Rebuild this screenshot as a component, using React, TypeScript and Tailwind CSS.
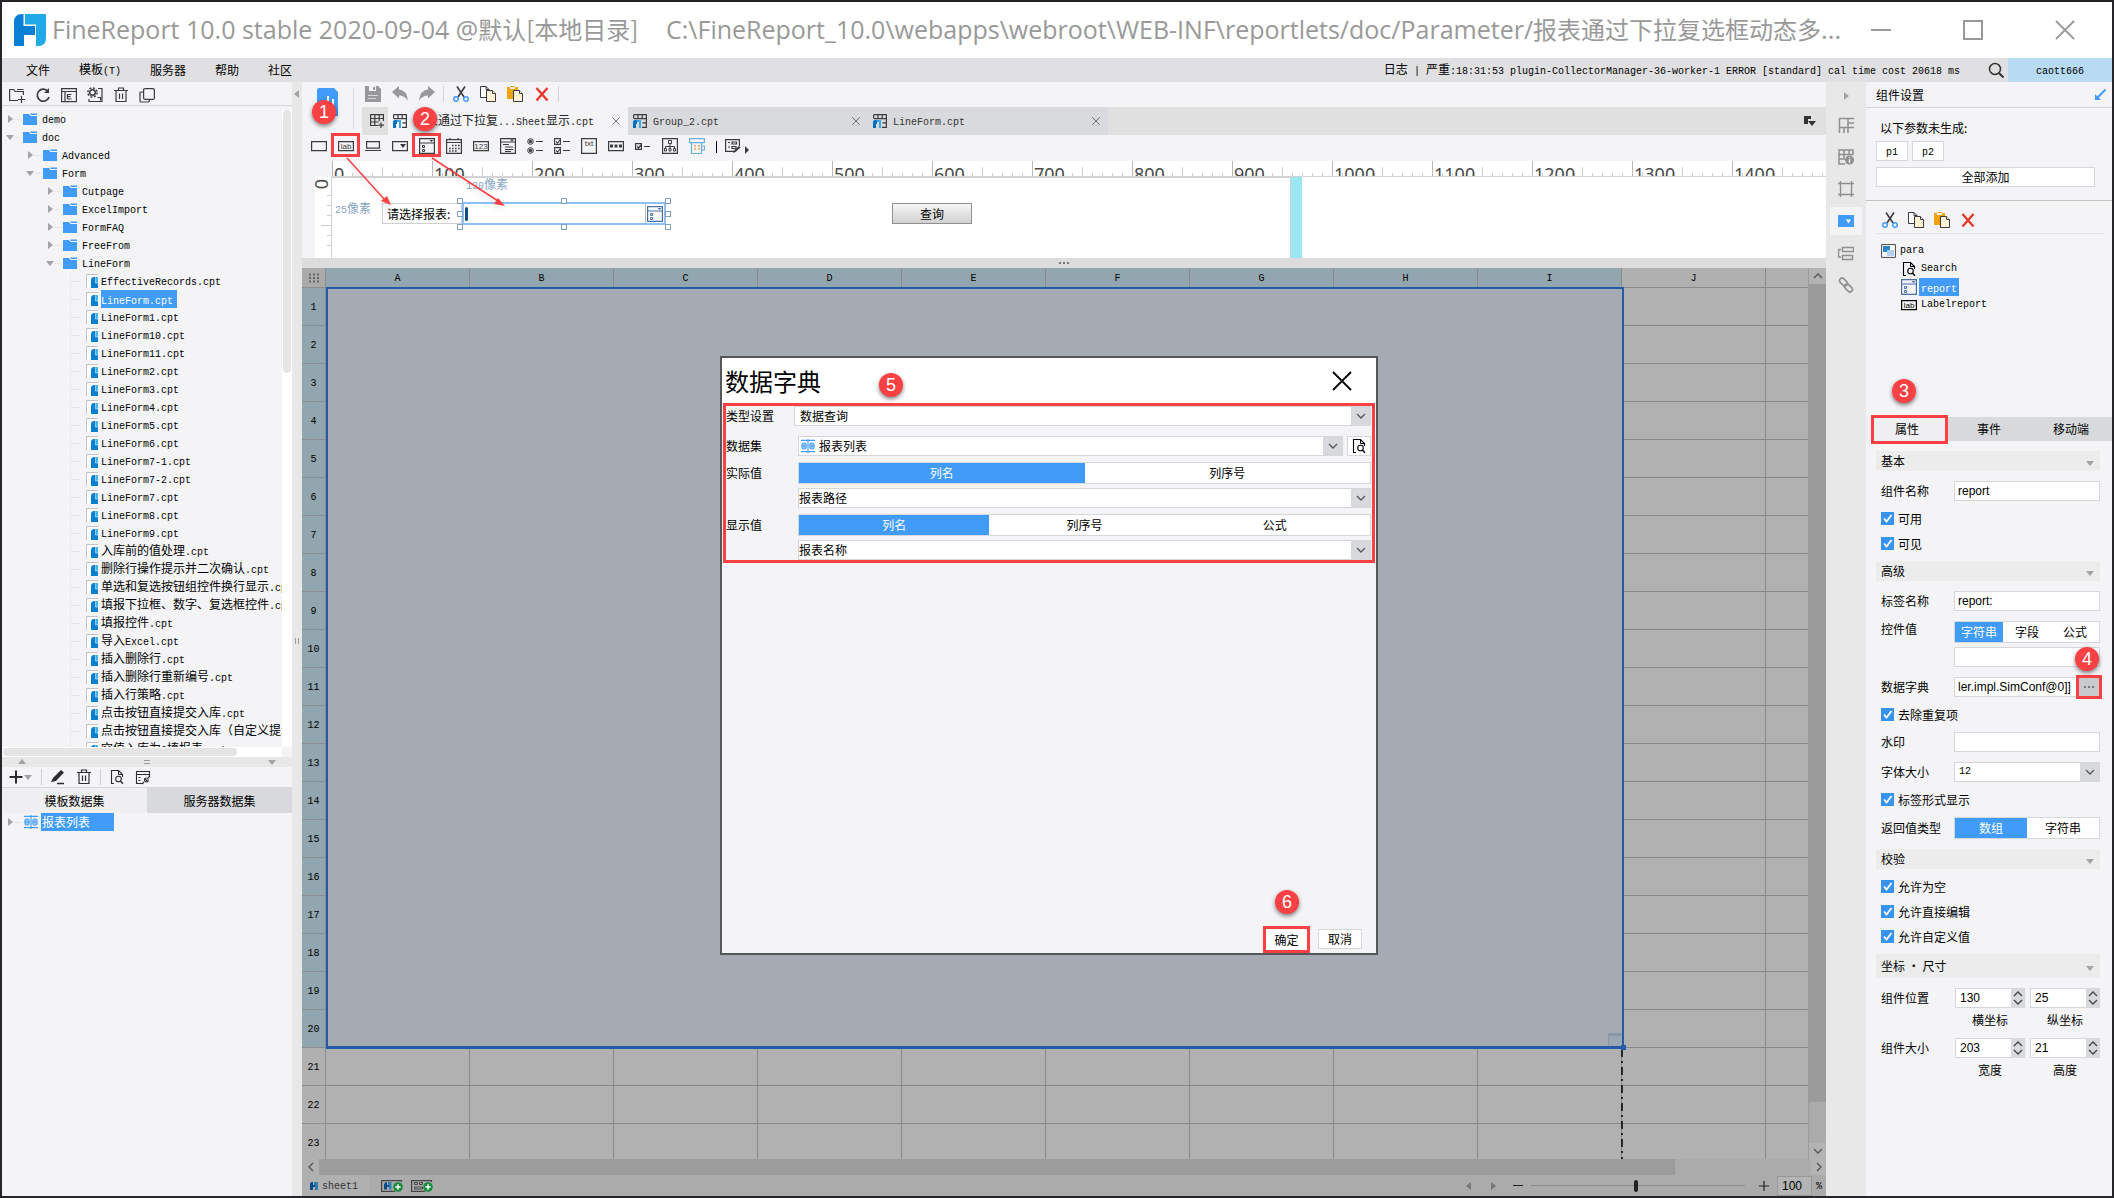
import React from "react";

const CJK = /([\u2e80-\u9fff\uff00-\uffef\u3000-\u303f]+)/;

/* Mixed text: full-width glyphs at the parent size, Latin in half-width mono. */
function T({ children }: { children: string }) {
  return (
    <>
      {children.split(CJK).map((s, i) =>
        i % 2 === 1 ? (
          <React.Fragment key={i}>{s}</React.Fragment>
        ) : s ? (
          <span key={i} className="font-['Liberation_Mono','Noto_Sans_CJK_SC',monospace] text-[10px] whitespace-pre">
            {s}
          </span>
        ) : null
      )}
    </>
  );
}

function Svg({ children, className = "w-4 h-4", box = "0 0 16 16" }: { children: React.ReactNode; className?: string; box?: string }) {
  return (
    <svg viewBox={box} className={"shrink-0 block " + className} fill="none" stroke="currentColor" strokeWidth="1" aria-hidden="true">
      {children}
    </svg>
  );
}

const Scissors = () => (
  <Svg>
    <path d="M4 0.5 11 11M12 0.5 5 11" stroke="#3a3c3e" strokeWidth="1.6" />
    <circle cx="3" cy="13" r="2.3" stroke="#419bf9" strokeWidth="1.5" />
    <circle cx="13" cy="13" r="2.3" stroke="#419bf9" strokeWidth="1.5" />
  </Svg>
);
const Copy = () => (
  <Svg>
    <path d="M.5.5h5.5l3 3v8H.5z" fill="#fff" stroke="#3a3c3e" />
    <path d="M6 .5v3h3" stroke="#3a3c3e" />
    <path d="M6.500 4.500h6l3 3v8h-9z" fill="#fdf1d6" stroke="#3a3c3e" />
    <path d="M12.500 4.500v3h3" fill="#fff" stroke="#3a3c3e" />
  </Svg>
);
const Paste = () => (
  <Svg>
    <path d="M0 1h3v2h5V1h3v12H0z" fill="#f0a30f" stroke="none" />
    <path d="M3.500 .5h4" stroke="#e09a10" />
    <path d="M6.500 4.500h6l3 3v8h-9z" fill="#fdf1d6" stroke="#3a3c3e" />
    <path d="M12.500 4.500v3h3" fill="#fff" stroke="#3a3c3e" />
  </Svg>
);
const Delete = () => (
  <Svg>
    <path d="M2.500 2 13.500 14.500M13.500 2 2.500 14.500" stroke="#e8392f" strokeWidth="2.4" />
  </Svg>
);
const Trash = () => (
  <Svg>
    <path d="M1 3.500h14M5.500 3V1h5v2M3 4v10.500h10V4M6.500 6.500v5.500M9.500 6.500v5.500" strokeWidth="1.2" />
  </Svg>
);
const Preview = () => (
  <Svg>
    <path d="M5 14.500H2.500v-13h7l4 4V8" strokeWidth="1.1" />
    <path d="M9.500 1.500v4h4" />
    <circle cx="9.500" cy="10" r="2.800" strokeWidth="1.1" />
    <path d="m11.500 12.200 2.500 2.500" strokeWidth="1.4" />
  </Svg>
);
const Dropbox = ({ c = "#3a3c3e" }: { c?: string }) => (
  <Svg>
    <g stroke={c}>
      <path d="M.6.6h14.800v14.800H.6zM.6 5h14.800" strokeWidth="1.2" />
      <path d="M10.500 2h4l-2 2z" fill={c} stroke="none" />
      <path d="M3.500 7.500h2v2h-2zM3.500 11.500h2v2h-2z" />
    </g>
  </Svg>
);
const Glyph = ({ t, y = 11 }: { t: string; y?: number }) => (
  <text x="8" y={y} textAnchor="middle" fontSize="8" fontFamily="Liberation Sans, sans-serif" fill="currentColor" stroke="none">
    {t}
  </text>
);
const LabIcon = () => (
  <Svg>
    <path d="M.6 3.600h14.800v9H.6z" strokeWidth="1.2" />
    <Glyph t="lab" />
  </Svg>
);
const DataIcon = () => (
  <Svg className="w-3.5 h-3.5">
    <path d="M0 1.500h16M0 14.500h16M8 0v16" stroke="#419bf9" strokeWidth="1.3" />
    <rect x="1" y="4.500" width="5" height="7" rx="1.500" fill="#8fc3fb" stroke="#419bf9" />
    <rect x="10" y="4.500" width="5" height="7" rx="1.500" fill="#8fc3fb" stroke="#419bf9" />
    <path d="M1 8h5M10 8h5" stroke="#419bf9" />
  </Svg>
);
const Folder = () => (
  <Svg box="0 0 14 12" className="w-3.5 h-3">
    <path d="M0 1h6l1.500 2H14v9H0z" fill="#419bf9" stroke="none" />
    <path d="M7 .5h7v1.500H8z" fill="#419bf9" stroke="none" />
  </Svg>
);
const FileIcon = () => (
  <Svg box="0 0 12 14" className="w-3 h-3.5">
    <path d="M0 0h12v14H0z" fill="#fff" stroke="none" />
    <path d="M.5 14V.5H12" stroke="#c4c4c6" />
    <path d="M5 14V6q0-3 3-3h4v11z" fill="#0a7fd0" stroke="none" />
    <path d="M9.500 3H12v6H9.500z" fill="#3fb4ea" stroke="none" />
    <path d="M9.500 3v6H12" stroke="#d7effb" strokeWidth=".6" />
  </Svg>
);
const TabIcon = () => (
  <Svg box="0 0 14 14" className="w-3.5 h-3.5">
    <path d="M1 .6h12.400v12.800H9M1 4.600h12.400M5 .6v4M9.200.6v4M9.500 8.800h4M.6.6v4" strokeWidth="1.200" stroke="#3a3c3e" />
    <path d="M0 14V8q0-2 2-2h2v4H3v4z" fill="#0a6fc0" stroke="none" />
    <path d="M4 6h4v8H6V8H4z" fill="#36a9e6" stroke="none" />
  </Svg>
);
const Tri = ({ dir, className = "text-[#a3a3a5]" }: { dir: "r" | "l" | "d" | "u"; className?: string }) => (
  <Svg box="0 0 8 8" className={"w-2 h-2 " + className}>
    <path
      d={dir === "r" ? "M2 0l5 4-5 4z" : dir === "l" ? "M6 0 1 4l5 4z" : dir === "d" ? "M0 2h8L4 7z" : "M0 6h8L4 1z"}
      fill="currentColor"
      stroke="none"
    />
  </Svg>
);
const Chev = ({ dir = "d" }: { dir?: "d" | "u" | "l" | "r" }) => (
  <Svg box="0 0 10 10" className="w-2.5 h-2.5">
    <path
      d={dir === "d" ? "M1 3l4 4 4-4" : dir === "u" ? "M1 7l4-4 4 4" : dir === "l" ? "M7 1 3 5l4 4" : "M3 1l4 4-4 4"}
      strokeWidth="1.300"
    />
  </Svg>
);
const Cross = ({ className }: { className: string }) => (
  <Svg box="0 0 20 20" className={className}>
    <path d="M1 1l18 18M19 1 1 19" strokeWidth="1.800" />
  </Svg>
);

function Badge({ n, className }: { n: number; className: string }) {
  return (
    <span
      className={
        "absolute z-20 flex h-6 w-6 items-center justify-center rounded-full bg-[#fc4144] text-lg leading-none text-white shadow-[0_2px_4px_rgba(0,0,0,0.5)] font-['Liberation_Sans',sans-serif] " +
        className
      }
    >
      {n}
    </span>
  );
}

const topTree: [number, string, boolean][] = [
  [0, "demo", false],
  [0, "doc", true],
  [1, "Advanced", false],
  [1, "Form", true],
  [2, "Cutpage", false],
  [2, "ExcelImport", false],
  [2, "FormFAQ", false],
  [2, "FreeFrom", false],
  [2, "LineForm", true],
];
const files = [
  "EffectiveRecords.cpt", "LineForm.cpt", "LineForm1.cpt", "LineForm10.cpt", "LineForm11.cpt", "LineForm2.cpt",
  "LineForm3.cpt", "LineForm4.cpt", "LineForm5.cpt", "LineForm6.cpt", "LineForm7-1.cpt", "LineForm7-2.cpt",
  "LineForm7.cpt", "LineForm8.cpt", "LineForm9.cpt", "入库前的值处理.cpt", "删除行操作提示并二次确认.cpt",
  "单选和复选按钮组控件换行显示.cpt", "填报下拉框、数字、复选框控件.cpt", "填报控件.cpt", "导入Excel.cpt",
  "插入删除行.cpt", "插入删除行重新编号.cpt", "插入行策略.cpt", "点击按钮直接提交入库.cpt",
  "点击按钮直接提交入库（自定义提示）.cpt", "空值入库为0填报表.cpt",
];
const levelPad = ["pl-1", "pl-6", "pl-11"];

function Sidebar() {
  const tools: [string, React.ReactNode][] = [
    ["新建文件夹", <Svg key="a"><path d="M9 13.500H.600v-11h4l1.500 2h8.300V8" strokeWidth="1.200" /><path d="M8 2.500h6.500M12.500 9v7M9 12.500h7" strokeWidth="1.200" /></Svg>],
    ["刷新", <Svg key="b"><path d="M13 4.500A6 6 0 1 0 14 10" strokeWidth="1.700" /><path d="M14 1v5H9z" fill="currentColor" stroke="none" /></Svg>],
    ["显示", <Svg key="c"><path d="M.600 1.600h14.800v13H.600zM.600 4.500h14.800M4 4.500v10M6.500 7.500h4M6.500 12h4M6.500 7v5M6.500 9.700h3" strokeWidth="1.200" /></Svg>],
    ["设置", <Svg key="d"><circle cx="5.500" cy="5.500" r="2.800" strokeWidth="1.500" /><circle cx="5.500" cy="5.500" r="4.600" strokeWidth="1.500" strokeDasharray="2 1.600" /><path d="M11 1.500h4v13H2V12M10.500 10.500h3v3" strokeWidth="1.200" /></Svg>],
    ["删除", <Trash key="e" />],
    ["复制", <Svg key="f"><rect x="4.600" y="1.600" width="10.800" height="10.800" rx="1.500" strokeWidth="1.200" /><path d="M4 5H2q-1 0-1 1v8q0 1 1 1h7q1.500 0 1.500-2" strokeWidth="1.200" /></Svg>],
  ];
  return (
    <aside className="flex w-[290px] shrink-0 flex-col bg-[#f4f4f7]">
      <div className="flex h-6 shrink-0 items-center border-b border-[#d8d8da] pl-0.5 pt-0.5 text-[#3a3c3e]">
        {tools.map(([n, ic]) => (
          <button key={n} aria-label={n} className="flex h-5 w-[26px] items-center justify-center">{ic}</button>
        ))}
      </div>
      <div className="flex h-[641px] shrink-0 pt-1">
        <ul className="min-w-0 flex-1 overflow-hidden whitespace-nowrap">
          {topTree.map(([lv, name, open]) => (
            <li key={name} className={"flex h-[18px] items-center " + levelPad[lv]}>
              <Tri dir={open ? "d" : "r"} />
              <span className="mr-px h-px w-2 bg-[#e6e6e9]" />
              <Folder />
              <span className="ml-[5px]"><T>{name}</T></span>
            </li>
          ))}
          {files.map((f) => (
            <li key={f} className="flex h-[18px] items-center pl-[68px]">
              <span className="h-[18px] w-px shrink-0 bg-[#ebebee]" />
              <span className="mr-1.5 h-px w-[9px] shrink-0 bg-[#e6e6e9]" />
              <FileIcon />
              <span className={f === "LineForm.cpt" ? "ml-[3px] h-[18px] shrink-0 bg-[#419bf9] pr-1 leading-[18px] text-white" : "ml-[3px] shrink-0 leading-[18px]"}>
                <T>{f}</T>
              </span>
            </li>
          ))}
        </ul>
        <div className="w-2.5 bg-white">
          <div className="mx-px h-[263px] rounded-full bg-[#e6e6e7]" />
        </div>
      </div>
      <div className="flex h-2.5 shrink-0 pr-2.5">
        <div className="w-full bg-white p-px">
          <div className="h-2 w-[84%] rounded-full bg-[#e4e4e5]" />
        </div>
      </div>
      <div className="flex h-2.5 shrink-0 items-center justify-between bg-[#e8e8e8] px-4">
        <Tri dir="u" />
        <span className="h-1 w-1.5 border-y border-[#9a9a9a]" />
        <Tri dir="d" />
      </div>
      <div className="flex h-[21px] shrink-0 items-center border-b border-[#d8d8da] text-[#2b2d2f]">
        <button aria-label="添加" className="flex w-[39px] items-center pl-1.5">
          <Svg><path d="M8 1.500v13M1.500 8h13" strokeWidth="2" /></Svg>
          <Tri dir="d" />
        </button>
        <span className="h-4 w-px bg-[#cfcfd2]" />
        <button aria-label="编辑" className="ml-2"><Svg><path d="M1 13l2-4 8-8 3 2.500-8 8.500z" fill="currentColor" stroke="none" /><path d="M7 14.500h7" strokeWidth="1.500" /></Svg></button>
        <button aria-label="删除数据集" className="ml-2.5 mr-2"><Trash /></button>
        <span className="h-4 w-px bg-[#cfcfd2]" />
        <button aria-label="预览" className="ml-2"><Preview /></button>
        <button aria-label="连接" className="ml-2.5"><Svg><path d="M7 14.500H1.500v-12h13V7M1.500 5.500h13M3.500 8.500h2M3.500 11.500h2" strokeWidth="1.100" /><path d="m7 15 2-2M13 9l2-2M9.500 9.500l3.500 3.500" strokeWidth="1.300" /><circle cx="11.300" cy="11" r="2" /></Svg></button>
      </div>
      <div className="grid h-[25px] shrink-0 grid-cols-2">
        <button className="bg-[#efeff1]">模板数据集</button>
        <button className="bg-[#d8d9dc]">服务器数据集</button>
      </div>
      <div className="flex h-[18px] items-center pl-1">
        <Tri dir="r" />
        <span className="mr-0.5 h-px w-2 bg-[#e6e6e9]" />
        <DataIcon />
        <span className="ml-[3px] h-[18px] w-[73px] bg-[#419bf9] pl-px leading-[17px] text-white">报表列表</span>
      </div>
    </aside>
  );
}

const widgets: [string, React.ReactNode][] = [
  ["文本框", <Svg key="1"><path d="M.600 3.600h14.800v9H.600z" strokeWidth="1.200" /></Svg>],
  ["标签", <LabIcon key="2" />],
  ["按钮", <Svg key="3"><path d="M1.600 3.600h12.800v6.500H1.600zM0 12.500h16" strokeWidth="1.200" /></Svg>],
  ["下拉框", <Svg key="4"><path d="M.600 3.600h14.800v9H.600z" strokeWidth="1.200" /><path d="M8 6h6l-3 4z" fill="currentColor" stroke="none" /></Svg>],
  ["下拉复选框", <Dropbox key="5" />],
  ["日期", <Svg key="6"><path d="M.600 1.600h14.800v13.800H.600zM.600 4.500h14.800M4 0v2M12 0v2" strokeWidth="1.200" /><path d="M6 7.500h8M3 10.500h11M3 13h8" strokeWidth="1.600" strokeDasharray="1.600 1.400" /></Svg>],
  ["数字", <Svg key="7"><path d="M.600 3.600h14.800v9H.600z" strokeWidth="1.200" /><Glyph t="123" /></Svg>],
  ["下拉树", <Svg key="8"><path d="M.600 .600h14.800v14.800H.600zM.600 4h14.800M3 6.500h6M5 9h8M5 11.500h8M5 13.500h6" strokeWidth="1.200" /><path d="M10 1.500h4l-2 2z" fill="currentColor" stroke="none" /></Svg>],
  ["单选按钮组", <Svg key="9"><circle cx="3.500" cy="3.500" r="2.800" /><circle cx="3.500" cy="3.500" r="1.300" fill="currentColor" /><circle cx="3.500" cy="12.500" r="2.800" /><circle cx="3.500" cy="12.500" r="1.300" fill="currentColor" /><path d="M9 3.500h7M9 12.500h7" strokeWidth="1.200" /></Svg>],
  ["复选按钮组", <Svg key="10"><path d="M.600 .600h5.800v5.800H.600zM.600 9.600h5.800v5.800H.600zM2 3.500l1.500 1.500L6 2M2 12.500l1.500 1.500L6 11M9 3.500h7M9 12.500h7" strokeWidth="1.100" /></Svg>],
  ["文本域", <Svg key="11"><path d="M.600 .600h14.800v14.800H.600z" strokeWidth="1.200" /><Glyph t="txt" y={8} /></Svg>],
  ["密码", <Svg key="12"><path d="M.600 3.600h14.800v9H.600z" strokeWidth="1.200" /><path d="M2 8h12" strokeWidth="3" strokeDasharray="3 1.500" /></Svg>],
  ["复选框", <Svg key="13"><path d="M.600 5.600h5.800v5.800H.600zM2 8.500l1.500 1.500L6 7M9 8.500h6" strokeWidth="1.200" /></Svg>],
  ["树", <Svg key="14"><path d="M.600 .600h14.800v14.800H.600z" strokeWidth="1.200" /><path d="M6.500 2.500h3v3h-3zM8 5.500v5M3.500 10.500v-2h9v2M2.500 10.500h2v2.500h-2zM7 10.500h2v2.500H7zM11.500 10.500h2v2.500h-2z" /></Svg>],
  ["表格", <Svg key="15"><g stroke="#6ab1de"><path d="M.600 .600h14.800v4H.600zM2.500 4.500v11h10v-11M12.500 8h3v4h-3" strokeWidth="1.200" /><path d="M5 8h2M9 8h2M5 11h2M9 11h2" stroke="#e9a95c" strokeWidth="1.500" /></g></Svg>],
];

function Ruler() {
  return (
    <div className="ml-[30px] flex h-4 shrink-0 overflow-hidden border-b border-[#d4d4d6] bg-white">
      {Array.from({ length: 15 }, (_, i) => (
        <div key={i} className="relative flex h-4 w-[100px] shrink-0 items-end border-l border-[#b9b9bb]">
          <span className="absolute left-px top-0.5 z-10 text-lg leading-[22px] text-[#4a4a4a] font-['Noto_Sans',sans-serif]">{i * 100}</span>
          {Array.from({ length: 9 }, (_, k) => (
            <span key={k} className={k === 4 ? "ml-[9px] h-2.5 w-px bg-[#cdcdcf]" : "ml-[9px] h-1 w-px bg-[#cdcdcf]"} />
          ))}
        </div>
      ))}
    </div>
  );
}

const Handle = ({ className }: { className: string }) => <span className={"absolute h-1.5 w-1.5 border border-[#7f9fc2] bg-white " + className} />;

function DesignArea() {
  return (
    <div className="flex h-[81px] shrink-0 pl-[13px]">
      <div className="flex w-[17px] shrink-0 flex-col items-end border-r border-[#d0d0d2] bg-white">
        <span className="-mt-1 h-[22px] w-4 -rotate-90 text-center text-lg leading-[18px] text-[#4a4a4a] font-['Noto_Sans',sans-serif]">0</span>
        {[0, 1, 2, 3, 4, 5].map((k) => (
          <span key={k} className={k === 3 ? "mb-[9px] h-px w-2.5 shrink-0 bg-[#cdcdcf]" : "mb-[9px] h-px w-1 shrink-0 bg-[#cdcdcf]"} />
        ))}
      </div>
      <div className="relative flex min-w-0 flex-1 bg-white">
        <div className="w-[959px] border-t border-r border-[#d0d0d2]" />
        <div className="w-[11px] bg-[#9ce5f4]" />
        <span className="absolute left-[3px] top-[22px] leading-[18px] text-[#8aa5c4]"><T>25像素</T></span>
        <span className="absolute left-[134px] -top-0.5 leading-[18px] text-[#8aa5c4]"><T>130像素</T></span>
        <label htmlFor="rep" className="absolute left-[50px] top-[26px] h-[21px] w-20 border border-[#d0d0d2] pl-1 leading-5">请选择报表:</label>
        <div className="absolute left-[130px] top-[25px] flex h-[23px] w-[204px] items-center border-2 border-[#8ec0f7] bg-white">
          <span className="ml-px h-3.5 w-[3px] rounded-sm bg-[#0f4c81]" />
          <input id="rep" className="h-full min-w-0 flex-1 border-r border-[#bdbdbf] outline-none" />
          <span className="mx-px"><Dropbox c="#4a6ea5" /></span>
          <Handle className="-left-[7px] -top-1.5" /><Handle className="left-[97px] -top-1.5" /><Handle className="-right-[7px] -top-1.5" />
          <Handle className="-left-[7px] top-[7px]" /><Handle className="-right-[7px] top-[7px]" />
          <Handle className="-left-[7px] -bottom-[7px]" /><Handle className="left-[97px] -bottom-[7px]" /><Handle className="-right-[7px] -bottom-[7px]" />
        </div>
        <button className="absolute left-[560px] top-[26px] h-[21px] w-20 border border-[#8f8f8f] bg-linear-to-b from-[#f6f6f6] to-[#d2d2d2] leading-none">查询</button>
      </div>
    </div>
  );
}

const cols = "ABCDEFGHIJ".split("");

function Sheet() {
  return (
    <div className="flex min-h-0 flex-1 flex-col bg-[#ababab] text-black">
      <div className="flex min-h-0 flex-1">
        <div className="relative min-w-0 flex-1 overflow-hidden bg-[#b1b1b1]">
          <table className="w-full table-fixed border-separate border-spacing-0 font-['Liberation_Mono',monospace] text-[10px]">
            <colgroup>
              <col className="w-6" />
              {cols.map((c) => <col key={c} className="w-36" />)}
              <col />
            </colgroup>
            <thead>
              <tr className="h-5">
                <th className="border-r border-b border-[#8e8e8e] bg-[#aaa] p-0 text-[#444]">
                  <Svg className="mx-auto h-2.5 w-2.5" box="0 0 10 10"><path d="M0 1.500h10M0 5h10M0 8.500h10" strokeWidth="2" strokeDasharray="2 2" stroke="#666" /></Svg>
                </th>
                {cols.map((c) => (
                  <th key={c} scope="col" className={"border-r border-b border-[#8a8a8a] p-0 pt-[3px] font-normal " + (c === "J" ? "bg-[#b0b0b0]" : "bg-[#91a6ae]")}>{c}</th>
                ))}
                <th className="border-b border-[#8a8a8a] bg-[#b0b0b0] p-0" />
              </tr>
            </thead>
            <tbody>
              {Array.from({ length: 23 }, (_, r) => (
                <tr key={r} className="h-[38px]">
                  <th scope="row" className={"border-r border-b border-[#8a8f92] p-0 pt-0.5 font-normal " + (r < 20 ? "bg-[#91a6ae]" : "bg-[#b0b0b0]")}>{r + 1}</th>
                  {cols.map((c) => <td key={c} className="border-r border-b border-[#888] p-0" />)}
                  <td className="border-b border-[#888] p-0" />
                </tr>
              ))}
            </tbody>
          </table>
          <div className="absolute left-6 top-[19px] flex h-[762px] w-[1298px] items-end justify-end border-2 border-b-3 border-[#235ba8] bg-[#a5aab3]">
            <span className="h-[13px] w-3.5 border-l border-t-3 border-[#8797a5] bg-[#9ca6b3]" />
          </div>
          <svg className="absolute left-[1319px] top-[781px] h-28 w-0.5" aria-hidden="true">
            <path d="M1 0v112" stroke="#000" strokeWidth="1.500" strokeDasharray="8 4 2 4" />
          </svg>
          <div className="absolute left-[1319px] top-[777px] h-[5px] w-[5px] bg-[#235ba8]" />
        </div>
        <div className="flex w-[18px] shrink-0 flex-col border-l border-[#9c9c9c] text-[#555]">
          <span className="flex h-4 items-center justify-center bg-[#b3b3b3]"><Chev dir="u" /></span>
          <span className="grow-[20] basis-0 bg-[#9b9b9b]" />
          <span className="grow basis-0" />
          <span className="flex h-4 items-center justify-center bg-[#b3b3b3]"><Chev /></span>
        </div>
      </div>
      <div className="flex h-4 shrink-0 text-[#555]">
        <span className="flex w-[17px] items-center justify-center bg-[#b0b0b0]"><Chev dir="l" /></span>
        <span className="grow-[10] basis-0 bg-[#9c9c9c]" />
        <span className="grow basis-0" />
        <span className="flex w-[15px] items-center justify-center bg-[#b3b3b3]"><Chev dir="r" /></span>
      </div>
      <div className="flex h-[21px] shrink-0 items-center">
        <button className="flex h-full w-[67px] items-center bg-[#b0b0b0] pl-2 text-[#333]">
          <Svg box="0 0 8 8" className="h-2 w-2"><path d="M0 8V2q0-2 2-2h1v3h2v2H3v3z" fill="#0a4a85" stroke="none" /><path d="M4 0h4v8H5V3H4z" fill="#2b7fb0" stroke="none" /></Svg>
          <span className="ml-1"><T>sheet1</T></span>
        </button>
        {["新增模板", "新增聚合块"].map((n, i) => (
          <button key={n} aria-label={n} className={i ? "ml-2" : "ml-3"}>
            <Svg box="0 0 22 12" className="h-3 w-[22px]">
              <path d="M20.500 2V.600H.600v10.800H14" stroke="#444" strokeWidth="1.200" />
              {i === 0 ? (
                <>
                  <path d="M3 9.500V4l2-2h1v3h2v2H6v2.500z" fill="#0a4a85" stroke="none" />
                  <path d="M7 2h3.500v7.500H8V5H7z" fill="#2b7fb0" stroke="none" />
                </>
              ) : (
                <path d="M3.500 2.500h3v2h-3zM8.500 2.500h3v2h-3zM3.500 7h8v2h-8z" stroke="#444" />
              )}
              <circle cx="17" cy="7" r="4.800" fill="#168a3c" stroke="none" />
              <path d="M17 4.300v5.400M14.300 7h5.400" stroke="#fff" strokeWidth="1.400" />
            </Svg>
          </button>
        ))}
        <span className="flex-1" />
        <Tri dir="l" className="text-[#777]" />
        <span className="w-4" />
        <Tri dir="r" className="text-[#777]" />
        <button aria-label="缩小" className="ml-4 h-px w-2.5 bg-[#222]" />
        <label className="relative mx-2 flex h-4 w-[214px] items-center">
          <input aria-label="缩放" type="range" defaultValue={49} className="h-px w-full appearance-none bg-[#8d8d8d] [&::-webkit-slider-thumb]:h-3 [&::-webkit-slider-thumb]:w-1 [&::-webkit-slider-thumb]:appearance-none [&::-webkit-slider-thumb]:rounded-sm [&::-webkit-slider-thumb]:bg-[#222]" />
        </label>
        <button aria-label="放大" className="ml-1.5 mr-2 text-[#222]"><Svg className="h-2.5 w-2.5" box="0 0 10 10"><path d="M5 0v10M0 5h10" strokeWidth="1.200" /></Svg></button>
        <input aria-label="缩放比例" defaultValue="100" className="h-5 w-[35px] border border-[#999] bg-[#b4b4b4] pl-1 font-['Liberation_Sans',sans-serif]" />
        <span className="w-3.5 text-center"><T>%</T></span>
      </div>
    </div>
  );
}

const iconCell = "flex h-6 w-[27px] items-center justify-center";

function Center() {
  const tabs = ["Group_2.cpt", "LineForm.cpt"];
  return (
    <main className="relative flex min-w-0 flex-1 flex-col bg-[#f4f4f7]">
      <div className="flex h-[53px] shrink-0">
        <div className="my-1.5 w-[52px] shrink-0 border-r border-[#dcdcde] pl-[15px]">
          <Svg box="0 0 22 34" className="h-[34px] w-[22px]">
            <path d="M2 0h15l4 4v24H0V2q0-2 2-2z" fill="#419bf9" stroke="none" />
            <path d="M6 18v-4M11 18V8M16 18v-7" stroke="#fff" strokeWidth="2" />
            <path d="M7 30h8l-4 4z" fill="#666" stroke="none" />
          </Svg>
        </div>
        <div className="flex min-w-0 flex-1 flex-col">
          <div className="flex h-[25px] shrink-0 items-start pl-[5px]">
            <button aria-label="保存" className={iconCell}><Svg><path d="M0 0h13l3 3v13H0z" fill="#98989b" stroke="none" /><path d="M4 0h7v5H4z" fill="#f4f4f7" stroke="none" /><path d="M8 1h2v3H8z" fill="#98989b" stroke="none" /><path d="M3 9.500h10M3 12.500h8" stroke="#d8d8da" /></Svg></button>
            <button aria-label="撤销" className={iconCell}><Svg><path d="M0 6 7 0v3.500q8 .5 9 11.500-3-5.500-9-5.500v3z" fill="#98989b" stroke="none" /></Svg></button>
            <button aria-label="重做" className={iconCell}><Svg><path d="M16 6 9 0v3.500Q1 4 0 15q3-5.500 9-5.500v3z" fill="#98989b" stroke="none" /></Svg></button>
            <span className="mx-[3px] mt-1 h-4 w-px bg-[#d4d4d6]" />
            <button aria-label="剪切" className={iconCell}><Scissors /></button>
            <button aria-label="复制" className={iconCell}><Copy /></button>
            <button aria-label="粘贴" className={iconCell}><Paste /></button>
            <button aria-label="删除" className={iconCell}><Delete /></button>
            <span className="mx-[3px] mt-1 h-4 w-px bg-[#d4d4d6]" />
          </div>
          <div className="ml-2 flex h-7 bg-[#e0e0e1]">
            <button aria-label="新建模板" className="flex w-[26px] items-center justify-end pr-1 text-[#3a3c3e]">
              <Svg box="0 0 14 14" className="h-3.5 w-3.5"><path d="M8 11.500H.600V.600h12.800V7M.600 4.500h12.800M.600 8h8M4.800.600v11M9.200.600V7M11 8.500v5.500M8.300 11.200h5.700" strokeWidth="1.200" /></Svg>
            </button>
            <div className="flex w-60 items-center bg-[#f4f4f7] pl-[5px]">
              <TabIcon />
              <span className="ml-[7px] flex-1 whitespace-nowrap text-[#222]"><T>报表通过下拉复...Sheet显示.cpt</T></span>
              <button aria-label="关闭" className="mr-2 text-[#444]"><Cross className="h-2 w-2" /></button>
            </div>
            {tabs.map((t) => (
              <div key={t} className="flex w-60 items-center bg-[#d9dadd] pl-[5px]">
                <TabIcon />
                <span className="ml-1.5 flex-1 text-[#333]"><T>{t}</T></span>
                <button aria-label="关闭" className="mr-2 text-[#444]"><Cross className="h-2 w-2" /></button>
              </div>
            ))}
            <span className="flex-1" />
            <button aria-label="全部标签" className="mr-2.5"><Svg className="h-3 w-3" box="0 0 12 12"><path d="M0 1h7v3H4v5H0z" fill="#333" stroke="none" /><path d="M4 6h8l-4 5z" fill="#333" stroke="none" /></Svg></button>
          </div>
        </div>
      </div>
      <div className="flex h-[26px] shrink-0 items-start pl-[3px] text-[#3a3c3e]">
        {widgets.map(([n, ic]) => (
          <button key={n} aria-label={n} className="relative flex h-[22px] w-[27px] items-center justify-center">
            {ic}
            {(n === "标签" || n === "下拉复选框") && <span className="absolute -inset-x-px -top-0.5 bottom-0 border-3 border-[#f94144]" />}
          </button>
        ))}
        <span className="ml-1.5 mt-1.5 h-3 w-px bg-black" />
        <button aria-label="自定义控件" className="ml-2 flex h-[22px] items-center gap-1">
          <Svg><path d="M9 13.400H.600V1.600h13.800V8M3 4.500h2M7 4h4.500v2H7zM3 9h2M7 8.500h4v2H7z" strokeWidth="1.200" /><path d="m8 15 1-2.500L14 8l1.500 1.500L10.500 14z" fill="currentColor" stroke="none" /></Svg>
          <Svg box="0 0 4 8" className="mt-2 h-2 w-1"><path d="M0 0l4 4-4 4z" fill="currentColor" stroke="none" /></Svg>
        </button>
      </div>
      <Ruler />
      <DesignArea />
      <div className="flex h-2.5 shrink-0 items-center justify-center gap-0.5 bg-[#dcdcdd]">
        {[0, 1, 2].map((k) => <span key={k} className="h-0.5 w-0.5 bg-[#777]" />)}
      </div>
      <Sheet />
      <Badge n={1} className="left-2.5 top-[18px]" />
      <Badge n={2} className="left-[111px] top-[25px]" />
      <svg className="pointer-events-none absolute left-10 top-[72px] z-10 h-14 w-[170px] drop-shadow-md" viewBox="0 0 170 56" aria-hidden="true">
        <path d="M5 4 43 46M90 4l66 43" stroke="#f94144" strokeWidth="1.500" />
        <path d="m49 51-10-4 6-5zM163 52l-11-2 4-6z" fill="#f94144" />
      </svg>
    </main>
  );
}

function Rail() {
  const icons = [
    <Svg key="0"><path d="M1.500 16V1.500H10V16M1.500 10.500H10M6 10.500V16M10 1.500h6M10 6h6M10 10.500h6" strokeWidth="1.500" /></Svg>,
    <Svg key="1"><path d="M7 15H1V1h14v5M1 5.500h14M1 10h6M6 1v9M11 1v4" strokeWidth="1.500" /><circle cx="11.500" cy="11" r="4.500" fill="#8f8f92" stroke="none" /><path d="M11.500 8v1M11.500 10v4" stroke="#e8e8e8" strokeWidth="1.500" /></Svg>,
    <Svg key="2"><path d="M0 2.500h16M0 13.500h16M2.500 0v16M13.500 0v16" strokeWidth="1.400" /></Svg>,
    <Svg key="3"><path d="M0 2h16v12H0z" fill="#419bf9" stroke="none" /><path d="M8 6.500h5l-2.500 4z" fill="#fff" stroke="none" /></Svg>,
    <Svg key="4"><path d="M4.500 2.500H15.500v4H4.500zM4.500 10.500h10v4h-10zM3 4.500H.500V12H3" strokeWidth="1.500" /></Svg>,
    <Svg key="5"><rect x="1" y="2.500" width="9" height="5" rx="2.500" transform="rotate(45 5.500 5)" strokeWidth="1.600" /><rect x="6" y="8.500" width="9" height="5" rx="2.500" transform="rotate(45 10.500 11)" strokeWidth="1.600" /></Svg>,
  ];
  return (
    <nav className="flex w-10 shrink-0 flex-col items-center bg-[#e8e8e8] text-[#8f8f92]">
      <span className="flex h-[27px] items-center"><Tri dir="r" /></span>
      {icons.map((ic, i) => (
        <button key={i} aria-label={"面板" + (i + 1)} className={i === 3 ? "my-0.5 flex h-7 w-8 items-center justify-center bg-[#f4f4f7]" : "my-0.5 flex h-7 w-8 items-center justify-center"}>
          {ic}
        </button>
      ))}
    </nav>
  );
}

const box = "border border-[#d6d7da] bg-white";

function Head({ children, tall }: { children: string; tall?: boolean }) {
  return (
    <h3 className={"flex items-center justify-between bg-[#ececec] pl-[5px] pr-1.5 " + (tall ? "h-6" : "h-5")}>
      {children}
      <span className="mt-1"><Tri dir="d" /></span>
    </h3>
  );
}
function Check({ children }: { children: string }) {
  return (
    <label className="flex h-[15px] items-center gap-1 pl-[5px]">
      <span className="grid h-[13px] w-[13px] place-items-center">
        <input type="checkbox" defaultChecked className="col-start-1 row-start-1 h-[13px] w-[13px] appearance-none bg-[#3693f0]" />
        <Svg box="0 0 13 13" className="pointer-events-none col-start-1 row-start-1 h-[13px] w-[13px] text-white"><path d="M3 6.500 5.500 9.500 10.500 3" strokeWidth="1.800" /></Svg>
      </span>
      {children}
    </label>
  );
}
function Field({ label, id, value = "" }: { label: string; id: string; value?: string }) {
  return (
    <div className="flex h-5 items-center">
      <label htmlFor={id} className="w-[78px] shrink-0 pl-[5px]">{label}</label>
      <input id={id} defaultValue={value} className={"h-5 min-w-0 flex-1 px-[3px] font-['Liberation_Sans',sans-serif] " + box} />
    </div>
  );
}
function Seg({ items, className = "" }: { items: string[]; className?: string }) {
  return (
    <div className={"flex h-[22px] " + box + " " + className}>
      {items.map((t, i) => (
        <button key={t} type="button" className={"flex-1 " + (i === 0 ? "bg-[#419bf9] text-white" : "")}>{t}</button>
      ))}
    </div>
  );
}
function Pick({ id, value, label, className = "", pad = "pl-0", icon }: { id: string; value: string; label?: string; className?: string; pad?: string; icon?: React.ReactNode }) {
  return (
    <div className={"flex h-5 items-center " + box + " " + className}>
      {icon}
      <select id={id} aria-label={label} defaultValue={value} className={"h-full min-w-0 flex-1 appearance-none bg-white outline-none " + pad}>
        <option>{value}</option>
      </select>
      <span className="flex h-full w-[19px] items-center justify-center bg-[#d8d9dc] text-[#555]"><Chev /></span>
    </div>
  );
}
function Spin({ id, label, value }: { id: string; label: string; value: string }) {
  return (
    <div className="flex-1">
      <div className={"flex h-5 " + box}>
        <input id={id} defaultValue={value} className="h-full w-0 min-w-0 flex-1 pl-1 font-['Liberation_Sans',sans-serif]" />
        <div className="flex w-[13px] flex-col items-center justify-between bg-[#d8d9dc] text-[#444]">
          <button type="button" aria-label={label + "增加"} className="h-2"><Chev dir="u" /></button>
          <button type="button" aria-label={label + "减少"} className="h-2.5"><Chev /></button>
        </div>
      </div>
      <label htmlFor={id} className="mt-1 block h-4 text-center leading-4">{label}</label>
    </div>
  );
}

function RightPanel() {
  return (
    <aside className="relative flex w-[246px] shrink-0 flex-col bg-[#f4f4f7]">
      <div className="flex h-[26px] shrink-0 items-center justify-between border-b border-[#d4d4d6] pl-2.5 pr-1.5">
        组件设置
        <Svg className="h-3 w-3" box="0 0 12 12"><path d="M11.500.500 3 9" stroke="#419bf9" strokeWidth="2" /><path d="M1 5v6h6z" fill="#419bf9" stroke="none" /></Svg>
      </div>
      <div className="border-b border-[#c4c4c0] px-2.5 pb-[13px] pt-3">
        <p className="h-4 pl-1 leading-4">以下参数未生成:</p>
        <div className="mt-[5px] flex gap-1">
          <button className={"h-5 w-8 leading-none " + box}><T>p1</T></button>
          <button className={"h-5 w-8 leading-none " + box}><T>p2</T></button>
        </div>
        <button className={"mt-1.5 h-5 w-[219px] " + box}>全部添加</button>
      </div>
      <div className="ml-2.5 mr-2 flex h-[33px] shrink-0 items-center border-b border-[#e2e2e5] pl-0.5 pt-1.5">
        <button aria-label="剪切控件" className="w-[26px] pl-1"><Scissors /></button>
        <button aria-label="复制控件" className="w-[26px] pl-1"><Copy /></button>
        <button aria-label="粘贴控件" className="w-[26px] pl-1"><Paste /></button>
        <button aria-label="删除控件" className="w-[26px] pl-1"><Delete /></button>
      </div>
      <ul className="h-[183px] shrink-0 pt-2">
        <li className="flex h-[18px] items-center gap-1 pl-[15px]">
          <Svg box="0 0 15 14" className="h-3.5 w-[15px]"><path d="M.600 .600h13.800v12.800H.600z" fill="#fff" stroke="#444" /><path d="M2 2h7v6H2z" fill="#2a86c8" stroke="none" /><path d="M6 6h7v6H6z" fill="#b3d2f3" stroke="none" /></Svg>
          <T>para</T>
        </li>
        <li className="flex h-[18px] items-center gap-1 pl-[35px]"><span className="w-4"><Preview /></span><T>Search</T></li>
        <li className="flex h-[18px] items-center gap-0.5 pl-[35px]"><Dropbox c="#4a6ea5" /><span className="h-[18px] bg-[#419bf9] px-0.5 leading-[18px] text-white"><T>report</T></span></li>
        <li className="flex h-[18px] items-center gap-1 pl-[35px]"><LabIcon /><T>Labelreport</T></li>
      </ul>
      <div className="relative grid h-6 shrink-0 grid-cols-3">
        <button className="bg-[#efeff1]">属性</button>
        <button className="bg-[#d8d9dc]">事件</button>
        <button className="bg-[#d8d9dc]">移动端</button>
        <span className="pointer-events-none absolute left-[5px] -top-0.5 h-[29px] w-[77px] border-3 border-[#f94144]" />
      </div>
      <form className="ml-2.5 mr-3 mt-2.5 flex flex-col gap-2.5">
        <Head>基本</Head>
        <Field label="组件名称" id="wname" value="report" />
        <Check>可用</Check>
        <Check>可见</Check>
        <Head>高级</Head>
        <Field label="标签名称" id="lname" value="report:" />
        <div className="flex">
          <label htmlFor="wval" className="w-[78px] shrink-0 pl-[5px] leading-4">控件值</label>
          <div className="flex-1">
            <Seg items={["字符串", "字段", "公式"]} />
            <input id="wval" className={"mt-1 block h-5 w-full " + box} />
          </div>
        </div>
        <div className="relative flex h-5 items-center">
          <label htmlFor="dict" className="w-[78px] shrink-0 pl-[5px]">数据字典</label>
          <input id="dict" defaultValue="ler.impl.SimConf@0]]" className={"h-5 min-w-0 flex-1 pl-[3px] font-['Liberation_Sans',sans-serif] " + box} />
          <button type="button" aria-label="编辑数据字典" className="relative flex h-5 w-[23px] items-center justify-center gap-0.5 bg-[#c9cacd]">
            {[0, 1, 2].map((k) => <span key={k} className="h-0.5 w-0.5 bg-[#777]" />)}
            <span className="absolute -inset-y-0.5 -left-px -right-0.5 border-3 border-[#f94144]" />
          </button>
          <Badge n={4} className="-top-[30px] right-px" />
        </div>
        <Check>去除重复项</Check>
        <Field label="水印" id="wm" />
        <div className="flex h-5 items-center">
          <label htmlFor="fs" className="w-[78px] shrink-0 pl-[5px]">字体大小</label>
          <Pick id="fs" value="12" className="flex-1 font-['Liberation_Mono',monospace] text-[10px]" pad="pl-1" />
        </div>
        <Check>标签形式显示</Check>
        <div className="flex h-[22px] items-center">
          <span className="w-[78px] shrink-0 pl-[5px]">返回值类型</span>
          <Seg items={["数组", "字符串"]} className="flex-1" />
        </div>
        <Head>校验</Head>
        <Check>允许为空</Check>
        <Check>允许直接编辑</Check>
        <Check>允许自定义值</Check>
        <Head tall>坐标 · 尺寸</Head>
        <div className="flex gap-[5px]">
          <span className="w-[74px] shrink-0 pl-[5px] leading-5">组件位置</span>
          <Spin id="px" label="横坐标" value="130" />
          <Spin id="py" label="纵坐标" value="25" />
        </div>
        <div className="flex gap-[5px]">
          <span className="w-[74px] shrink-0 pl-[5px] leading-5">组件大小</span>
          <Spin id="sw" label="宽度" value="203" />
          <Spin id="sh" label="高度" value="21" />
        </div>
      </form>
      <Badge n={3} className="left-[26px] top-[297px]" />
    </aside>
  );
}

function Dialog() {
  return (
    <section role="dialog" aria-label="数据字典" className="absolute left-[718px] top-[354px] z-30 flex h-[599px] w-[658px] flex-col border-2 border-[#55585b] bg-[#f4f4f7]">
      <header className="flex h-[45px] shrink-0 items-center justify-between bg-white pl-[3px] pr-6 text-2xl">
        数据字典
        <button aria-label="关闭"><Cross className="h-5 w-5" /></button>
      </header>
      <div className="mx-px flex h-40 shrink-0 flex-col border-3 border-[#f94144] pr-px">
        <div className="flex h-5 items-center">
          <label htmlFor="d1" className="w-[68px]">类型设置</label>
          <Pick id="d1" value="数据查询" className="flex-1" pad="pl-[5px]" />
        </div>
        <div className="mt-2.5 flex h-5 items-center">
          <label htmlFor="d2" className="w-[72px]">数据集</label>
          <Pick id="d2" value="报表列表" className="flex-1 pl-0.5" pad="pl-1" icon={<DataIcon />} />
          <button aria-label="预览数据集" className={"ml-1 flex h-5 w-6 items-center justify-center " + box}><Preview /></button>
        </div>
        <div className="mt-1.5 flex h-[22px] items-center">
          <span className="w-[72px]">实际值</span>
          <Seg items={["列名", "列序号"]} className="flex-1" />
        </div>
        <Pick id="d3" label="实际值" value="报表路径" className="ml-[72px] mt-1" />
        <div className="mt-1.5 flex h-[22px] items-center">
          <span className="w-[72px]">显示值</span>
          <Seg items={["列名", "列序号", "公式"]} className="flex-1" />
        </div>
        <Pick id="d4" label="显示值" value="报表名称" className="ml-[72px] mt-1" />
      </div>
      <footer className="mt-auto flex h-[27px] shrink-0 justify-end gap-2 pr-3.5">
        <button className="h-[27px] w-[47px] border-3 border-[#f94144] bg-white">确定</button>
        <button className={"mt-[3px] h-5 w-11 " + box}>取消</button>
      </footer>
      <Badge n={5} className="left-[157px] top-[15px]" />
      <Badge n={6} className="left-[553px] top-[532px]" />
    </section>
  );
}

export default function App() {
  return (
    <div className="relative flex h-screen flex-col overflow-hidden border-2 border-[#26262a] bg-[#f4f4f7] text-xs leading-4 text-black font-['Noto_Sans_CJK_SC',sans-serif]">
      <header className="flex h-14 shrink-0 items-center bg-white pl-3 text-2xl text-[#999]">
        <Svg box="0 0 32 32" className="h-8 w-8">
          <path d="M0 32V8Q0 0 8 0h1.500v12H21v9H10v11z" fill="#0a7fd6" stroke="none" />
          <path d="M11 0h21v24q0 8-8 8h-2V10.500H11z" fill="#22a9e8" stroke="none" />
        </Svg>
        <h1 className="ml-1.5 flex flex-1 whitespace-pre">
          <span className="w-[614px]"><span className="font-['Open_Sans',sans-serif] text-[25px]">FineReport 10.0 stable 2020-09-04 @</span>默认[本地目录]</span>
          <span><span className="font-['Open_Sans',sans-serif] text-[25px]">C:\FineReport_10.0\webapps\webroot\WEB-INF\reportlets/doc/Parameter/</span>报表通过下拉复选框动态多...</span>
        </h1>
        <div className="flex w-[241px] shrink-0 items-center justify-between pr-[37px]">
          <button aria-label="最小化" className="h-5 w-5"><Svg box="0 0 20 20" className="h-5 w-5"><path d="M0 10h20" strokeWidth="2" /></Svg></button>
          <button aria-label="最大化" className="h-5 w-5 border-2 border-[#999]" />
          <button aria-label="关闭"><Cross className="h-5 w-5" /></button>
        </div>
      </header>
      <div className="flex h-6 shrink-0 items-center bg-[#e0e0e2] pl-6">
        <nav className="flex flex-1 gap-[29px]">
          {["文件", "模板(T)", "服务器", "帮助", "社区"].map((m) => <button key={m} className="whitespace-nowrap"><T>{m}</T></button>)}
        </nav>
        <span className="mr-7 whitespace-nowrap"><T>日志 | 严重:18:31:53 plugin-CollectorManager-36-worker-1 ERROR [standard] cal time cost 20618 ms</T></span>
        <button aria-label="搜索" className="mr-1 text-[#333]"><Svg><circle cx="7" cy="7" r="5.500" strokeWidth="1.500" /><path d="m11 11 4.500 4.500" strokeWidth="2" /></Svg></button>
        <button className="h-full w-[104px] bg-[#b7dbf2]"><T>caott666</T></button>
      </div>
      <div className="flex min-h-0 flex-1">
        <Sidebar />
        <div className="relative flex w-2.5 shrink-0 flex-col items-center bg-[#e8e8e8] pt-2">
          <Tri dir="l" />
          <span className="mt-[540px] h-1.5 w-1 border-x border-[#9a9a9a]" />
        </div>
        <Center />
        <Rail />
        <RightPanel />
      </div>
      <Dialog />
    </div>
  );
}
